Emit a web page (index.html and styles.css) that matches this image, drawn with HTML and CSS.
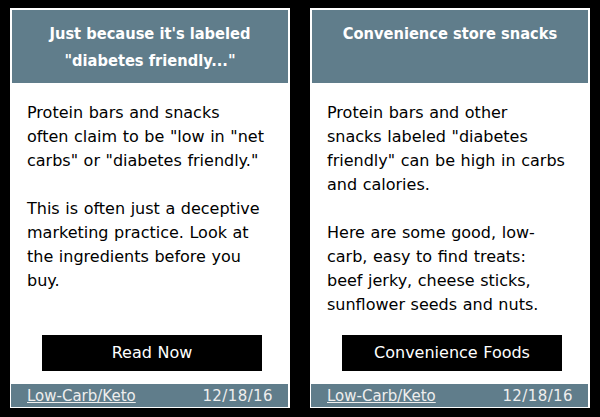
FILE: index.html
```
<!DOCTYPE html>
<html>
<head>
<meta charset="utf-8">
<link rel="stylesheet" href="styles.css">
</head>
<body>
<div class="cards">
  <div class="card">
    <div class="card-head"><h2 class="title">Just because it's labeled "diabetes friendly..."</h2></div>
    <div class="card-body">
      <p class="text">Protein bars and snacks<br>often claim to be "low in "net<br>carbs" or "diabetes friendly."</p>
      <p class="text">This is often just a deceptive<br>marketing practice. Look at<br>the ingredients before you<br>buy.</p>
    </div>
    <a class="btn">Read Now</a>
    <div class="card-foot"><a class="cat">Low-Carb/Keto</a><span class="date">12/18/16</span></div>
  </div>
  <div class="card">
    <div class="card-head"><h2 class="title">Convenience store snacks</h2></div>
    <div class="card-body">
      <p class="text">Protein bars and other<br>snacks labeled "diabetes<br>friendly" can be high in carbs<br>and calories.</p>
      <p class="text">Here are some good, low-<br>carb, easy to find treats:<br>beef jerky, cheese sticks,<br>sunflower seeds and nuts.</p>
    </div>
    <a class="btn">Convenience Foods</a>
    <div class="card-foot"><a class="cat">Low-Carb/Keto</a><span class="date">12/18/16</span></div>
  </div>
</div>
</body>
</html>
```
FILE: styles.css
```
html, body {
  margin: 0;
  padding: 0;
  background: #000;
  height: 100%;
}
body {
  font-family: "DejaVu Sans", sans-serif;
  font-size: 16px;
  word-spacing: 0.5px;
  color: #000;
}
.cards {
  display: flex;
  gap: 20px;
  padding: 8px 10px;
}
.card {
  width: 280px;
  height: 400px;
  box-sizing: border-box;
  border: 2px solid #fff;
  background: #fff;
  display: flex;
  flex-direction: column;
}
.card-head {
  background: #607d8b;
  height: 73px;
  flex: none;
  box-sizing: border-box;
  padding-top: 10px;
}
.title {
  margin: 0;
  color: #fff;
  font-family: "DejaVu Sans Condensed", "DejaVu Sans", sans-serif;
  font-size: 16.3px;
  word-spacing: 0;
  font-weight: bold;
  line-height: 27px;
  text-align: center;
  padding: 0 20px;
}
.card-body {
  flex: 1;
  min-height: 0;
  padding: 18px 6px 0 15px;
  white-space: nowrap;
}
.text {
  margin: 0 0 24px;
  line-height: 24px;
}
.text:last-child {
  margin-bottom: 0;
}
.btn {
  display: block;
  width: 220px;
  height: 36px;
  line-height: 36px;
  margin: 0 0 13px 30px;
  background: #000;
  color: #fff;
  text-align: center;
  flex: none;
}
.card-foot {
  flex: none;
  height: 23px;
  margin: 0 0 -1px -1px;
  background: #607d8b;
  display: flex;
  justify-content: space-between;
  align-items: center;
  padding: 0 15px 0 16px;
  color: #eee;
  font-size: 15px;
  word-spacing: 0;
}
.cat {
  color: #eee;
  text-decoration: underline;
}
.date {
  color: #eee;
  letter-spacing: 0.4px;
}
```
